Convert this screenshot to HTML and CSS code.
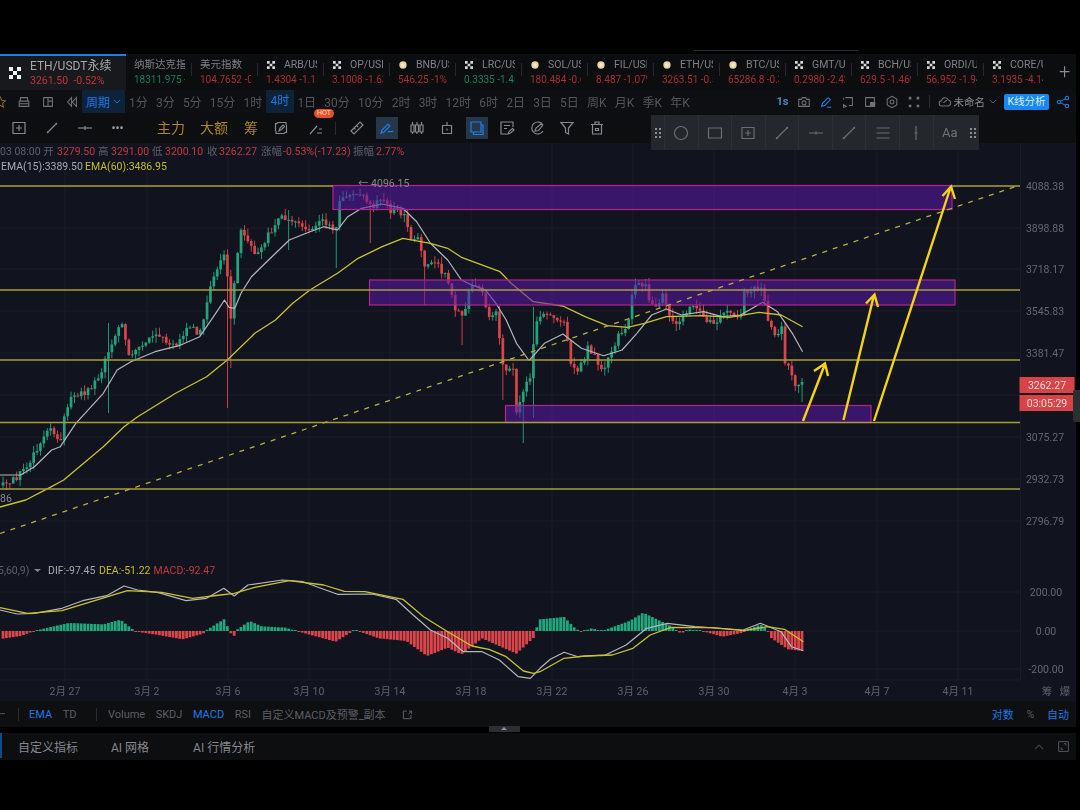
FILE: index.html
```html
<!DOCTYPE html>
<html lang="zh">
<head>
<meta charset="utf-8">
<title>ETH/USDT</title>
<link rel="stylesheet" href="styles.css">
</head>
<body>
<svg class="defs" width="0" height="0" aria-hidden="true">
  <symbol id="okx" viewBox="0 0 12 12"><path fill="currentColor" d="M0 0h4v4H0zM8 0h4v4H8zM4 4h4v4H4zM0 8h4v4H0zM8 8h4v4H8z"/></symbol>
  <symbol id="coin" viewBox="0 0 12 12"><circle cx="6" cy="6" r="5.5" fill="#e6d6a4"/><circle cx="6" cy="6" r="2.6" fill="#f3ecd2"/></symbol>
</svg>
<div class="topline"><span class="topmark"></span></div>
<div class="app">
  <nav class="tabs">
    <div class="tab-main">
      <svg class="logo"><use href="#okx"/></svg>
      <div class="tab-main-text">
        <div class="tab-main-name">ETH/USDT永续</div>
        <div class="tab-main-price red">3261.50&nbsp; -0.52%</div>
      </div>
    </div>
    <div class="tab"><div class="tab-in"><div class="tab-name">纳斯达克指</div><div class="tab-price green">18311.975 -</div></div></div>
    <div class="tab"><div class="tab-in"><div class="tab-name">美元指数</div><div class="tab-price red">104.7652 -0.</div></div></div>
    <div class="tab"><div class="tab-in"><div class="tab-name"><svg class="ti"><use href="#okx"/></svg>ARB/US</div><div class="tab-price red">1.4304 -1.15</div></div></div>
    <div class="tab"><div class="tab-in"><div class="tab-name"><svg class="ti"><use href="#okx"/></svg>OP/USD</div><div class="tab-price red">3.1008 -1.63</div></div></div>
    <div class="tab"><div class="tab-in"><div class="tab-name"><svg class="ti"><use href="#coin"/></svg>BNB/US</div><div class="tab-price red">546.25 -1%</div></div></div>
    <div class="tab"><div class="tab-in"><div class="tab-name"><svg class="ti"><use href="#okx"/></svg>LRC/US</div><div class="tab-price green">0.3335 -1.45</div></div></div>
    <div class="tab"><div class="tab-in"><div class="tab-name"><svg class="ti"><use href="#coin"/></svg>SOL/US</div><div class="tab-price red">180.484 -0.6</div></div></div>
    <div class="tab"><div class="tab-in"><div class="tab-name"><svg class="ti"><use href="#coin"/></svg>FIL/USD</div><div class="tab-price red">8.487 -1.079</div></div></div>
    <div class="tab"><div class="tab-in"><div class="tab-name"><svg class="ti"><use href="#coin"/></svg>ETH/US</div><div class="tab-price red">3263.51 -0.5</div></div></div>
    <div class="tab"><div class="tab-in"><div class="tab-name"><svg class="ti"><use href="#coin"/></svg>BTC/US</div><div class="tab-price red">65286.8 -0.3</div></div></div>
    <div class="tab"><div class="tab-in"><div class="tab-name"><svg class="ti"><use href="#okx"/></svg>GMT/US</div><div class="tab-price red">0.2980 -2.42</div></div></div>
    <div class="tab"><div class="tab-in"><div class="tab-name"><svg class="ti"><use href="#okx"/></svg>BCH/US</div><div class="tab-price red">629.5 -1.469</div></div></div>
    <div class="tab"><div class="tab-in"><div class="tab-name"><svg class="ti"><use href="#okx"/></svg>ORDI/U</div><div class="tab-price red">56.952 -1.94</div></div></div>
    <div class="tab tab-last"><div class="tab-in"><div class="tab-name"><svg class="ti"><use href="#okx"/></svg>CORE/U</div><div class="tab-price red">3.1935 -4.14</div></div></div>
    <div class="tab-add">+</div>
  </nav>

  <div class="periods">
    <svg class="ic ic-star" viewBox="0 0 16 16"><path d="M8 2l2 4 4 .6-3 3 .8 4.2L8 11.8 4.200 13.800 5 9.600l-3-3L6 6z"/></svg>
    <svg class="ic" viewBox="0 0 16 16"><path d="M4 7V3h8v4M2.500 7h11v6h-11zM2.500 10h11"/></svg>
    <svg class="ic" viewBox="0 0 16 16"><path d="M3 3h5v10H3zM8 3h5v4H8zM8 7h5v6H8z"/></svg>
    <svg class="ic" viewBox="0 0 16 16"><path d="M7.500 3L3 8l4.500 5zM13 3L8.500 8l4.500 5z"/></svg>
    <div class="period-btn">周期<svg class="chev" viewBox="0 0 10 6"><path d="M1 1l4 4 4-4"/></svg></div>
    <div class="period-list">
      <span>1分</span><span>3分</span><span>5分</span><span>15分</span><span>1时</span><span class="on">4时</span><span>1日</span><span>30分</span><span>10分</span><span>2时</span><span>3时</span><span>12时</span><span>6时</span><span>2日</span><span>3日</span><span>5日</span><span>周K</span><span>月K</span><span>季K</span><span>年K</span>
    </div>
    <div class="period-right">
      <span class="one-s">1s</span>
      <svg class="ic" viewBox="0 0 16 16"><path d="M2 5h3l1-2h4l1 2h3v8H2z"/><circle cx="8" cy="9" r="2.300"/></svg>
      <svg class="ic ic-blue" viewBox="0 0 16 16"><path d="M3 13l1-3.500L10.500 3 13 5.500 6.500 12zM9 14h5"/></svg>
      <svg class="ic" viewBox="0 0 16 16"><path d="M5 3h8v9H9M3 3v2M3 11l3 2-3 1zM7 3"/></svg>
      <svg class="ic" viewBox="0 0 16 16"><path d="M3 3h10v10H3z"/><path class="fillc" d="M8 8h6v5H8z"/></svg>
      <svg class="ic" viewBox="0 0 16 16"><path d="M8 1.500l5.500 3.200v6.600L8 14.500l-5.500-3.200V4.700z"/><circle cx="8" cy="8" r="2.200"/></svg>
      <svg class="ic" viewBox="0 0 16 16"><path class="fillc" d="M2 2h3v3H2zM11 2h3v3h-3zM2 11h3v3H2zM11 11h3v3h-3z"/></svg>
      <i class="vsep"></i>
      <svg class="ic" viewBox="0 0 16 16"><path d="M4.500 12.500a3 3 0 0 1-.4-6 4 4 0 0 1 7.700-.8 3.500 3.500 0 0 1 0 6.800zM6 9l4-3"/></svg>
      <span class="unnamed">未命名</span>
      <svg class="chev chev-dim" viewBox="0 0 10 6"><path d="M1 1l4 4 4-4"/></svg>
      <span class="kline-btn">K线分析</span>
      <svg class="ic ic-blue ic-share" viewBox="0 0 16 16"><circle cx="3.500" cy="8" r="2"/><circle cx="12.500" cy="3.500" r="2"/><circle cx="12.500" cy="12.500" r="2"/><path d="M5.300 7l5.400-2.600M5.300 9l5.400 2.600"/></svg>
    </div>
  </div>

  <div class="drawbar">
    <div class="cell33"><svg class="ic ic-lg" viewBox="0 0 16 16"><path d="M2 2.500h12v11H2zM8 5v6M5 8h6"/></svg></div>
    <div class="cell33"><svg class="ic ic-lg" viewBox="0 0 16 16"><path d="M3 13L13 3"/><circle class="fillc" cx="4" cy="12" r="1"/><circle class="fillc" cx="12" cy="4" r="1"/></svg></div>
    <div class="cell33"><svg class="ic ic-lg" viewBox="0 0 16 16"><path d="M1 8h14"/><path d="M8 6v4"/></svg></div>
    <div class="cell33 dots">•••</div>
    <div class="gold gold-1">主力</div>
    <div class="gold gold-2">大额</div>
    <div class="gold gold-3">筹</div>
    <div class="cell30 cell-a"><svg class="ic ic-lg" viewBox="0 0 16 16"><path d="M3 4l2-1.500h8V5M13 12l-2 1.500H3V11M2.500 3v8M13.500 5v8M6 11l1-3 3-3 1.500 1.500-3 3z"/></svg></div>
    <div class="cell30 cell-hot"><svg class="ic ic-lg" viewBox="0 0 16 16"><path d="M2 14l7-8M9 13h5M11 9h3"/></svg><span class="hot">HOT</span></div>
    <i class="vsep vsep-draw"></i>
    <div class="cell30"><svg class="ic ic-lg" viewBox="0 0 16 16"><path d="M2 11l9-9 3 3-9 9zM5 8l1.500 1.500M7.500 5.500L9 7"/></svg></div>
    <div class="cell30 cell-on"><svg class="ic ic-lg ic-blue" viewBox="0 0 16 16"><path d="M2 13l1-3 6-6 2 2-6 6zM9 12c2-2 3 1 5-1"/></svg></div>
    <div class="cell30"><svg class="ic ic-lg" viewBox="0 0 16 16"><path d="M2 5h3v7H2zM6.500 5h3v7h-3zM11 5h3v7h-3zM3.500 2v3M3.500 12v2M8 2v3M8 12v2M12.500 2v3M12.500 12v2"/></svg></div>
    <div class="cell30"><svg class="ic ic-lg" viewBox="0 0 16 16"><path d="M3.500 5.500h9v8h-9zM8 2v3.500M8 8.500v2"/></svg></div>
    <div class="cell30 cell-on"><svg class="ic ic-lg ic-blue" viewBox="0 0 16 16"><path d="M2 2h10v10H2zM4.500 12v2.500h9.500V5H12"/></svg></div>
    <div class="cell30"><svg class="ic ic-lg" viewBox="0 0 16 16"><path d="M14 7V2H2v12h6M5 5.500h6M5 8.500h3M9 14l1-2.500 3.500-3 1.500 1.500-3.500 3z"/></svg></div>
    <div class="cell30"><svg class="ic ic-lg" viewBox="0 0 16 16"><path d="M14 5a6 6 0 1 0 0 6M6 11l1-3 5-4 1.500 1.500-4 5z"/></svg></div>
    <div class="cell30"><svg class="ic ic-lg" viewBox="0 0 16 16"><path d="M2 2.500h12L9.500 8v6l-3-1.500V8z"/></svg></div>
    <div class="cell30"><svg class="ic ic-lg" viewBox="0 0 16 16"><path d="M2 4.500h12M6 4.500V2h4v2.500M3.500 4.500h9V14h-9zM6.500 8.500h3v2h-3z"/></svg></div>

    <div class="float-tools">
      <div class="handle"><b></b><b></b><b></b><b></b><b></b><b></b></div>
      <div class="ftool"><svg class="ic ic-lg" viewBox="0 0 16 16"><circle cx="8" cy="8" r="6.500"/></svg></div>
      <div class="ftool"><svg class="ic ic-lg" viewBox="0 0 16 16"><path d="M1.500 3h13v10h-13z"/></svg></div>
      <div class="ftool"><svg class="ic ic-lg" viewBox="0 0 16 16"><path d="M2 2.500h12v11H2zM8 5v6M5 8h6"/></svg></div>
      <div class="ftool"><svg class="ic ic-lg" viewBox="0 0 16 16"><path d="M2 14L14 2"/><circle class="fillc" cx="3" cy="13" r="1"/><circle class="fillc" cx="13" cy="3" r="1"/></svg></div>
      <div class="ftool"><svg class="ic ic-lg" viewBox="0 0 16 16"><path d="M1 8h14M8 6.500v3"/></svg></div>
      <div class="ftool"><svg class="ic ic-lg" viewBox="0 0 16 16"><path d="M2 14L14 2"/><circle class="fillc" cx="3" cy="13" r="1"/><circle class="fillc" cx="13" cy="3" r="1"/></svg></div>
      <div class="ftool"><svg class="ic ic-lg" viewBox="0 0 16 16"><path d="M1.500 3h13M1.500 8h13M1.500 13h13"/></svg></div>
      <div class="ftool"><svg class="ic ic-lg" viewBox="0 0 16 16"><path d="M8 1v14M6.500 8h3"/></svg></div>
      <div class="ftool ftext">Aa</div>
      <div class="handle"><b></b><b></b><b></b><b></b><b></b><b></b></div>
    </div>
  </div>

  <main class="chart">
    <svg class="plot" viewBox="0 143 1076 558" width="1076" height="558">
      <g id="grid"></g>
      <g id="candles"></g>
      <g id="hist"></g>
      <path id="ema15" class="ln ln-white"/>
      <path id="ema60" class="ln ln-yellow"/>
      <path id="dif" class="ln ln-white"/>
      <path id="dea" class="ln ln-yellow"/>
      <rect class="zone" x="333" y="185.500" width="619" height="24"/>
      <rect class="zone" x="369.500" y="280" width="585.500" height="25"/>
      <rect class="zone" x="505.500" y="405.500" width="365.500" height="17"/>
      <path class="hline" d="M0 186H333M952 186H1020M0 290H1020M0 360H1020M0 422.500H1020M0 489H1020"/>
      <path class="trend" d="M0 533.500L1020 185"/>
      <path class="arrow" d="M803 421L825 364M814 371L825 363.500L828 376"/>
      <path class="arrow" d="M843.500 420L874 295M866 303.500L874.500 294.500L878 307"/>
      <path class="arrow" d="M874 421L950.500 187.500M942.500 196L951 186.500L955 199"/>

      <text class="info" y="154.500"><tspan class="grey" x="0">03 08:00 开 </tspan><tspan class="vred" x="57">3279.50</tspan><tspan class="grey" x="98">高 </tspan><tspan class="vred" x="111">3291.00</tspan><tspan class="grey" x="152">低 </tspan><tspan class="vred" x="165">3200.10</tspan><tspan class="grey" x="207">收 </tspan><tspan class="vred" x="219">3262.27</tspan><tspan class="grey" x="261">涨幅 </tspan><tspan class="vred" x="283">-0.53%(-17.23)</tspan><tspan class="grey" x="353">振幅 </tspan><tspan class="vred" x="376">2.77%</tspan></text>
      <text class="info" y="170"><tspan class="lt" x="1">EMA(15):3389.50</tspan><tspan class="yl" x="85">EMA(60):3486.95</tspan></text>
      <text class="peak" x="358" y="187">← 4096.15</text>
      <text class="peak" x="0" y="502">86</text>
      <text class="info" y="574"><tspan class="grey" x="-2">5,60,9)</tspan></text>
      <path class="tri" d="M34 569h7l-3.500 3z"/>
      <text class="info" y="574"><tspan class="lt" x="48">DIF:-97.45</tspan><tspan class="yl" x="99">DEA:-51.22</tspan><tspan class="vred" x="153.500">MACD:-92.47</tspan></text>

      <g class="axis">
        <text x="1045" y="189.500">4088.38</text><text x="1045" y="231.500">3898.88</text><text x="1045" y="273">3718.17</text><text x="1045" y="315">3545.83</text><text x="1045" y="357">3381.47</text><text x="1045" y="441">3075.27</text><text x="1045" y="483">2932.73</text><text x="1045" y="525">2796.79</text>
        <text x="1046" y="596">200.00</text><text x="1046" y="635">0.00</text><text x="1046" y="673">-200.00</text>
      </g>
      <rect class="tag" x="1019.500" y="377" width="55" height="16"/>
      <rect class="tag" x="1019.500" y="395" width="55" height="16"/>
      <text class="tagt" x="1047" y="389">3262.27</text>
      <text class="tagt" x="1047" y="407">03:05:29</text>
      <g class="dates">
        <text x="65" y="695">2月 27</text><text x="147" y="695">3月 2</text><text x="228" y="695">3月 6</text><text x="309" y="695">3月 10</text><text x="390" y="695">3月 14</text><text x="471" y="695">3月 18</text><text x="552" y="695">3月 22</text><text x="633" y="695">3月 26</text><text x="714" y="695">3月 30</text><text x="795" y="695">4月 3</text><text x="877" y="695">4月 7</text><text x="958" y="695">4月 11</text><text x="1047" y="695">筹</text><text x="1065" y="695">爆</text>
      </g>
    </svg>
    <span class="scroll-tab"></span>
  </main>

  <div class="indbar">
    <span class="ell">•••</span><i class="vsep"></i>
    <span class="blue">EMA</span><span>TD</span><i class="vsep vsep-b"></i>
    <span>Volume</span><span>SKDJ</span><span class="blue">MACD</span><span>RSI</span><span>自定义MACD及预警_副本</span>
    <svg class="ic ic-small" viewBox="0 0 16 16"><path d="M13 9v5H2V3h5M9 8l5-5M10 3h4v4"/></svg>
    <div class="ind-right"><span class="blue">对数</span><span class="pct">%</span><span class="blue">自动</span></div>
  </div>
  <div class="gapbar"><span class="gap-handle"></span></div>
  <div class="panel">
    <span class="panel-mark"></span>
    <span class="p1">自定义指标</span><span class="p2">AI 网格</span><span class="p3">AI 行情分析</span>
    <div class="panel-right">
      <svg class="chev chev-up" viewBox="0 0 10 6"><path d="M1 5l4-4 4 4"/></svg>
      <svg class="ic ic-lg" viewBox="0 0 16 16"><path d="M2 2h12v12H2zM5 9v2.500h2.500M11 7V4.500H8.500"/></svg>
    </div>
  </div>
</div>
<script src="chart.js"></script>
</body>
</html>
```
FILE: styles.css
```css
* { box-sizing: border-box; }
html, body { margin: 0; padding: 0; background: #000; }
body {
  width: 1080px; height: 810px; overflow: hidden;
  font-family: Roboto, "Noto Sans CJK SC", "Liberation Sans", sans-serif;
  color: #7f838a;
}
.defs { display: block; height: 0; }
.topline { height: 54px; padding-top: 50px; padding-left: 694px; }
.topmark { display: block; width: 164px; height: 1px; background: #2a2a2c; }
.app { width: 1076px; filter: blur(.5px); }
.red { color: #c2343b; }
.green { color: #1c9168; }
.blue { color: #1d78e0; }

/* tabs */
.tabs { height: 36px; display: flex; background: #0c0d0f; position: relative; }
.tab-main {
  width: 126px; flex: none; display: flex; align-items: center; gap: 9px; padding-left: 9px;
  background: #17191c; border-top: 2px solid #1a7fe6;
}
.logo { width: 12px; height: 12px; color: #f2f2f2; flex: none; }
.tab-main-name { font-size: 12px; line-height: 15px; color: #a3a6ab; white-space: nowrap; margin-top: -1px; }
.tab-main-price { font-size: 10.500px; line-height: 13px; white-space: nowrap; }
.tab { width: 66px; flex: none; padding-left: 8px; position: relative; }
.tab::after { content: ""; position: absolute; right: 0; top: 9px; height: 13px; width: 1px; background: #26282c; }
.tab-last::after { display: none; }
.tab-in { width: 51px; overflow: hidden; padding-top: 3px; }
.tab-name { font-size: 10.500px; line-height: 14px; color: #7d8086; white-space: nowrap; display: flex; align-items: center; height: 16px; }
.ti { width: 8px; height: 8px; margin: 0 9px 0 1px; flex: none; color: #d8d8d8; }
.tab-price { font-size: 10px; line-height: 14px; white-space: nowrap; opacity: .85; }
.tab-add { font-size: 20px; font-weight: 300; color: #8a8d92; margin-left: 9px; line-height: 34px; }

/* icons */
.ic { width: 14px; height: 14px; fill: none; stroke: #6f7277; stroke-width: 1.200; flex: none; }
.ic-lg { width: 16px; height: 16px; stroke: #85888d; }
.ic-blue { stroke: #1d7fe8; }
.ic-small { width: 11px; height: 11px; margin-left: 6px; }
.fillc { fill: #6f7277; stroke: none; }
.chev { width: 8px; height: 5px; fill: none; stroke: #1d78e0; stroke-width: 1.200; flex: none; }
.chev-dim { stroke: #5f6268; margin-left: -4px; }
.chev-up { width: 10px; height: 6px; stroke: #3c3f44; }
.vsep { width: 1px; height: 13px; background: #2a2c30; flex: none; display: block; }

/* periods */
.periods { height: 23px; display: flex; align-items: center; background: #0e0f12; }
.periods > .ic { margin-right: 10px; }
.ic-star { margin-left: -7px; stroke: #8a6d1c; }
.period-btn {
  width: 43px; height: 23px; margin-left: -7px; display: flex; align-items: center; justify-content: center; gap: 3px;
  background: #0f2338; color: #1d78e0; font-size: 12px;
}
.period-list { display: flex; align-items: center; gap: 8.200px; margin-left: 4px; font-size: 12px; color: #53565c; white-space: nowrap; }
.period-list .on { color: #1d78e0; background: #0f2338; height: 23px; line-height: 23px; padding: 0 4.500px; margin: 0 -4.500px; }
.period-right { margin-left: auto; display: flex; align-items: center; gap: 8px; padding-right: 6px; }
.one-s { color: #4f86c0; font-size: 11px; font-weight: 700; }
.unnamed { font-size: 10.500px; color: #8a8d92; margin-left: -6px; white-space: nowrap; }
.kline-btn { background: #1a87f0; color: #d8ebff; font-size: 10.500px; width: 45px; height: 16px; line-height: 16px; text-align: center; border-radius: 2px; white-space: nowrap; margin-left: -1px; }
.ic-share { margin-left: -1px; }

/* draw bar */
.drawbar { height: 30px; display: flex; align-items: center; background: #0d0e10; padding-left: 2px; position: relative; }
.cell33 { width: 33px; display: flex; justify-content: center; }
.cell30 { width: 30px; height: 22px; display: flex; align-items: center; justify-content: center; position: relative; flex: none; }
.cell-on .ic { background: #26374a; box-sizing: content-box; padding: 3px; }
.dots { font-size: 12px; color: #a0a3a8; line-height: 14px; }
.gold { font-size: 14px; color: #b08420; line-height: 20px; white-space: nowrap; }
.gold-1 { margin-left: 23px; }
.gold-2 { margin-left: 15px; }
.gold-3 { margin-left: 16px; }
.cell-a { margin-left: 8px; }
.cell-hot { margin-left: 5px; }
.hot {
  position: absolute; right: -3px; top: -8px; background: #e8502a; color: #ffd9c8; font-size: 7px; line-height: 9px;
  padding: 0 3px; border-radius: 5px;
}
.vsep-draw { margin: 0 6px 0 4px; }
.float-tools {
  position: absolute; left: 651px; top: 2px; width: 328px; height: 35px; background: #24272b;
  display: flex; align-items: stretch; z-index: 2;
}
.ftool { flex: 1; display: flex; align-items: center; justify-content: center; border-left: 1px solid #2c2f33; }
.ftool .ic-lg { stroke: #6a6d72; }
.ftool .fillc { fill: #6a6d72; }
.ftext { font-size: 13px; color: #6f7277; }
.handle {
  width: 13px; flex: none; display: grid; grid-template-columns: 2px 2px; gap: 2px 2px; align-content: center; justify-content: center;
}
.handle b { width: 2px; height: 2px; background: #8b8e93; display: block; }

/* chart */
.chart { height: 558px; background: #11141e; position: relative; }
.plot { display: block; overflow: visible; }
.gridl { stroke: #181c28; stroke-width: 1; }
.ln { fill: none; stroke-width: 1.200; stroke-linejoin: round; }
.ln-white { stroke: #b4b6bb; }
.ln-yellow { stroke: #c9c22e; stroke-width: 1.300; }
.zone { fill: rgba(92, 24, 170, .55); stroke: #b0258f; stroke-width: 1.200; }
.hline { fill: none; stroke: #a89d38; stroke-width: 1.300; }
.trend { fill: none; stroke: #b8ad3e; stroke-width: 1.300; stroke-dasharray: 5 6; }
.arrow { fill: none; stroke: #f2d40f; stroke-width: 2.400; }
.info { font-size: 10.500px; }
.grey { fill: #5d6068; }
.lt { fill: #a6a9ae; }
.yl { fill: #c4bd2a; }
.vred { fill: #c13a40; }
.peak { font-size: 10.500px; fill: #85888e; }
.tri { fill: #85888e; }
.axis text { font-size: 10.500px; fill: #64676e; text-anchor: middle; }
.dates text { font-size: 10.500px; fill: #5f626a; text-anchor: middle; }
.tag { fill: #d84348; }
.tagt { font-size: 10.500px; fill: #f0d9d9; text-anchor: middle; }
.scroll-tab { position: absolute; left: 1073px; top: 247px; width: 7px; height: 32px; background: #2b2e33; border-radius: 2px 0 0 2px; }

/* indicator bar */
.indbar { height: 26px; display: flex; align-items: center; gap: 10.500px; background: #0e0f11; font-size: 11px; color: #5b5e65; white-space: nowrap; }
.ell { font-size: 5px; color: #888; width: 7px; overflow: hidden; }
.vsep-b { margin-left: 9.500px; }
.ind-right { margin-left: auto; display: flex; gap: 13px; align-items: center; padding-right: 7px; }
.pct { font-size: 10px; }
.gapbar { height: 6px; background: #000; position: relative; }
.gap-handle { position: absolute; left: 489px; top: -1px; width: 31px; height: 6px; background: #2c2e33; }
.gap-handle::after {
  content: ""; position: absolute; left: 12px; top: 1px;
  border: 3px solid transparent; border-top: 0; border-bottom: 3px solid #8b8e93;
}
.panel { height: 27px; background: #0d0e10; display: flex; align-items: center; position: relative; font-size: 12px; color: #85888e; white-space: nowrap; }
.panel-mark { position: absolute; left: 0; top: 0; width: 2px; height: 25px; background: #134a85; }
.p1 { margin-left: 18px; }
.p2 { margin-left: 33px; }
.p3 { margin-left: 44px; }
.panel-right { margin-left: auto; display: flex; align-items: center; gap: 13px; padding-right: 6px; }
.panel-right .ic-lg { stroke: #55585e; width: 13px; height: 13px; }
```
FILE: chart.js
```js
(function () {
  var NS = 'http://www.w3.org/2000/svg';
  function z3(p) { return [p[0] / 2.904, 180 + p[1] / 3]; }
  function z4(p) { return [500 + p[0] / 2.703, 180 + p[1] / 3]; }
  function z5(p) { return [p[0] / 2.904, 560 + p[1] / 3]; }
  function z6(p) { return [540 + p[0] / 2.904, 560 + p[1] / 3]; }
  function path(id, pts) {
    document.getElementById(id).setAttribute('d', 'M' + pts.map(function (p) {
      return p[0].toFixed(1) + ' ' + p[1].toFixed(1);
    }).join('L'));
  }
  function interp(pts, x) {
    if (x <= pts[0][0]) return pts[0][1];
    for (var i = 1; i < pts.length; i++) {
      if (x <= pts[i][0]) {
        var a = pts[i - 1], b = pts[i];
        return a[1] + (b[1] - a[1]) * (x - a[0]) / (b[0] - a[0] || 1);
      }
    }
    return pts[pts.length - 1][1];
  }
  function el(parent, name, attrs) {
    var e = document.createElementNS(NS, name);
    for (var k in attrs) e.setAttribute(k, attrs[k]);
    parent.appendChild(e);
    return e;
  }
  function noise(i) { var s = Math.sin(i * 127.1 + 11.7) * 43758.5453; return s - Math.floor(s); }

  var closes = [[0,900],[30,910],[75,860],[110,800],[145,730],[175,800],[185,710],[210,650],[260,630],[285,590],[315,520],[350,420],[375,530],[410,500],[445,470],[515,490],[550,440],[580,460],[620,290],[650,230],[660,250],[663,530],[672,400],[690,220],[700,150],[745,230],[780,160],[820,110],[870,130],[900,150],[935,110],[975,160],[985,70],[1030,30],[1080,80],[1115,50],[1130,90],[1175,100],[1200,200],[1210,150],[1230,260],[1270,250],[1300,300],[1320,380],[1345,420],[1365,320],[1395,330],[1425,420],[1440,400],[1465,580],[1490,560],[1500,700]].map(z3)
    .concat([[45,700],[60,650],[75,590],[85,590],[95,420],[130,400],[160,430],[175,420],[190,540],[210,580],[240,500],[275,570],[300,520],[320,460],[345,450],[352,370],[360,320],[390,310],[410,380],[440,350],[470,440],[495,400],[520,380],[570,430],[620,390],[650,420],[660,340],[690,320],[708,330],[720,400],[745,480],[762,430],[770,540],[785,560],[795,630],[810,605],[818,600]].map(z4));

  var wicks = [[107,323,413],[228,257,408],[232,340,368],[336,230,268],[369,213,243],[288,210,250],[423,290,305],[461,325,345],[504,373,400],[522,410,443],[532,307,418],[802,378,402]];
  var GREEN = '#22a37c', RED = '#d9454a', STEP = 3.4, LAST = 802;
  var n = Math.floor(LAST / STEP) + 1;
  var gc = document.getElementById('candles');
  var prev = null, i;
  for (i = 0; i < n; i++) {
    var x = LAST - STEP * (n - 1 - i);
    var c = interp(closes, x) + (noise(i) - 0.5) * 7;
    if (i === n - 1) c = 382;
    var o = prev === null ? c + 3 : prev;
    prev = c;
    var top = Math.min(o, c), bot = Math.max(o, c);
    var col = c < o ? GREEN : RED;
    var wt = top - noise(i + 300) * 7, wb = bot + noise(i + 600) * 7;
    wicks.forEach(function (w) {
      if (Math.abs(w[0] - x) <= 1.7) { wt = Math.min(wt, w[1]); wb = Math.max(wb, w[2]); }
    });
    el(gc, 'rect', { x: (x - 0.4).toFixed(1), y: wt.toFixed(1), width: 0.9, height: (wb - wt).toFixed(1), fill: col });
    el(gc, 'rect', { x: (x - 1.3).toFixed(1), y: top.toFixed(1), width: 2.7, height: Math.max(bot - top, 1).toFixed(1), fill: col });
  }

  var grid = document.getElementById('grid');
  [65,147,228,309,390,471,552,633,714,795,877,958].forEach(function (v) {
    el(grid, 'path', { d: 'M' + v + ' 143V680', 'class': 'gridl' });
  });
  [186,228,269,311,353,395,437,479,521,592,631,669].forEach(function (v) {
    el(grid, 'path', { d: 'M0 ' + v + 'H1020', 'class': 'gridl' });
  });
  el(grid, 'path', { d: 'M1020.500 143V680M0 680H1020', 'class': 'gridl' });

  var hist = [[0,-24],[60,-15],[100,0],[130,8],[200,24],[300,20],[350,34],[385,5],[395,-2],[460,-12],[530,-25],[590,-8],[600,3],[650,35],[658,35],[662,0],[682,-16],[690,5],[725,30],[760,14],[830,10],[860,0],[975,-32],[1025,0],[1040,0],[1100,-22],[1180,-30],[1240,-75],[1300,-50],[1340,-70],[1400,-22],[1500,-68],[1550,-20],[1560,15]].map(function (p) { return [p[0] / 2.904, p[1] / 3]; })
    .concat([[0,35],[70,42],[100,10],[120,-3],[150,8],[180,0],[260,30],[300,55],[320,45],[380,15],[410,-8],[430,5],[470,0],[530,-17],[590,-5],[600,3],[640,20],[660,5],[670,-20],[720,-55],[765,-60]].map(function (p) { return [540 + p[0] / 2.904, p[1] / 3]; }));
  var gh = document.getElementById('hist');
  for (i = 0; i < n; i++) {
    var hx = LAST - STEP * (n - 1 - i);
    var h = interp(hist, hx);
    var abs = Math.max(Math.abs(h), 1);
    el(gh, 'rect', {
      x: (hx - 1.4).toFixed(1),
      y: (h >= 0 ? 631 - abs : 631).toFixed(1),
      width: 2.8,
      height: abs.toFixed(1),
      fill: h >= 0 ? '#1fa67c' : '#d9454a'
    });
  }

  path('ema15', [[0,885],[60,885],[100,860],[150,810],[175,800],[220,730],[300,640],[340,570],[380,545],[450,515],[520,497],[580,470],[620,410],[652,360],[665,382],[682,385],[700,340],[730,290],[770,250],[840,180],[900,155],[940,140],[980,150],[1010,110],[1050,85],[1110,72],[1170,85],[1210,125],[1250,190],[1300,240],[1340,300],[1370,315],[1410,330],[1440,370],[1470,420],[1500,490],[1535,540]].map(z3)
    .concat([[80,540],[120,490],[170,462],[220,505],[280,527],[330,510],[370,460],[410,405],[450,387],[490,405],[550,395],[600,410],[650,405],[710,367],[750,395],[790,460],[818,515]].map(z4)));
  path('ema60', [[0,507]].concat([[75,960],[140,925],[185,900],[300,800],[360,740],[400,710],[510,640],[600,590],[660,540],[740,460],[800,420],[850,370],[900,330],[980,280],[1040,235],[1110,200],[1170,175],[1250,190],[1300,205],[1340,232]].map(z3))
    .concat([[0,275],[30,310],[90,365],[170,378],[230,410],[290,437],[345,442],[390,430],[450,410],[550,407],[620,412],[700,397],[760,405],[818,440]].map(z4)));
  path('dif', [[0,150],[50,162],[100,160],[180,145],[240,122],[310,107],[360,78],[400,90],[460,98],[540,122],[600,115],[650,85],[680,108],[720,75],[820,60],[880,65],[980,103],[1080,102],[1150,118],[1200,165],[1250,210],[1300,235],[1345,275],[1400,275],[1450,300],[1505,350],[1540,355]].map(z5)
    .concat([[0,325],[30,298],[70,277],[110,290],[190,285],[250,255],[310,205],[370,190],[450,200],[590,210],[640,190],[700,215],[730,260],[765,272]].map(z6)));
  path('dea', [[0,143],[80,160],[180,152],[370,92],[470,97],[560,115],[640,105],[680,100],[740,82],[840,62],[940,75],[1000,94],[1060,95],[1170,118],[1230,170],[1300,215],[1370,258],[1420,268],[1470,290],[1520,333],[1550,340]].map(z5)
    .concat([[0,335],[70,295],[130,288],[210,285],[270,265],[320,225],[380,202],[500,203],[590,212],[660,200],[710,208],[765,245]].map(z6)));
})();
```
